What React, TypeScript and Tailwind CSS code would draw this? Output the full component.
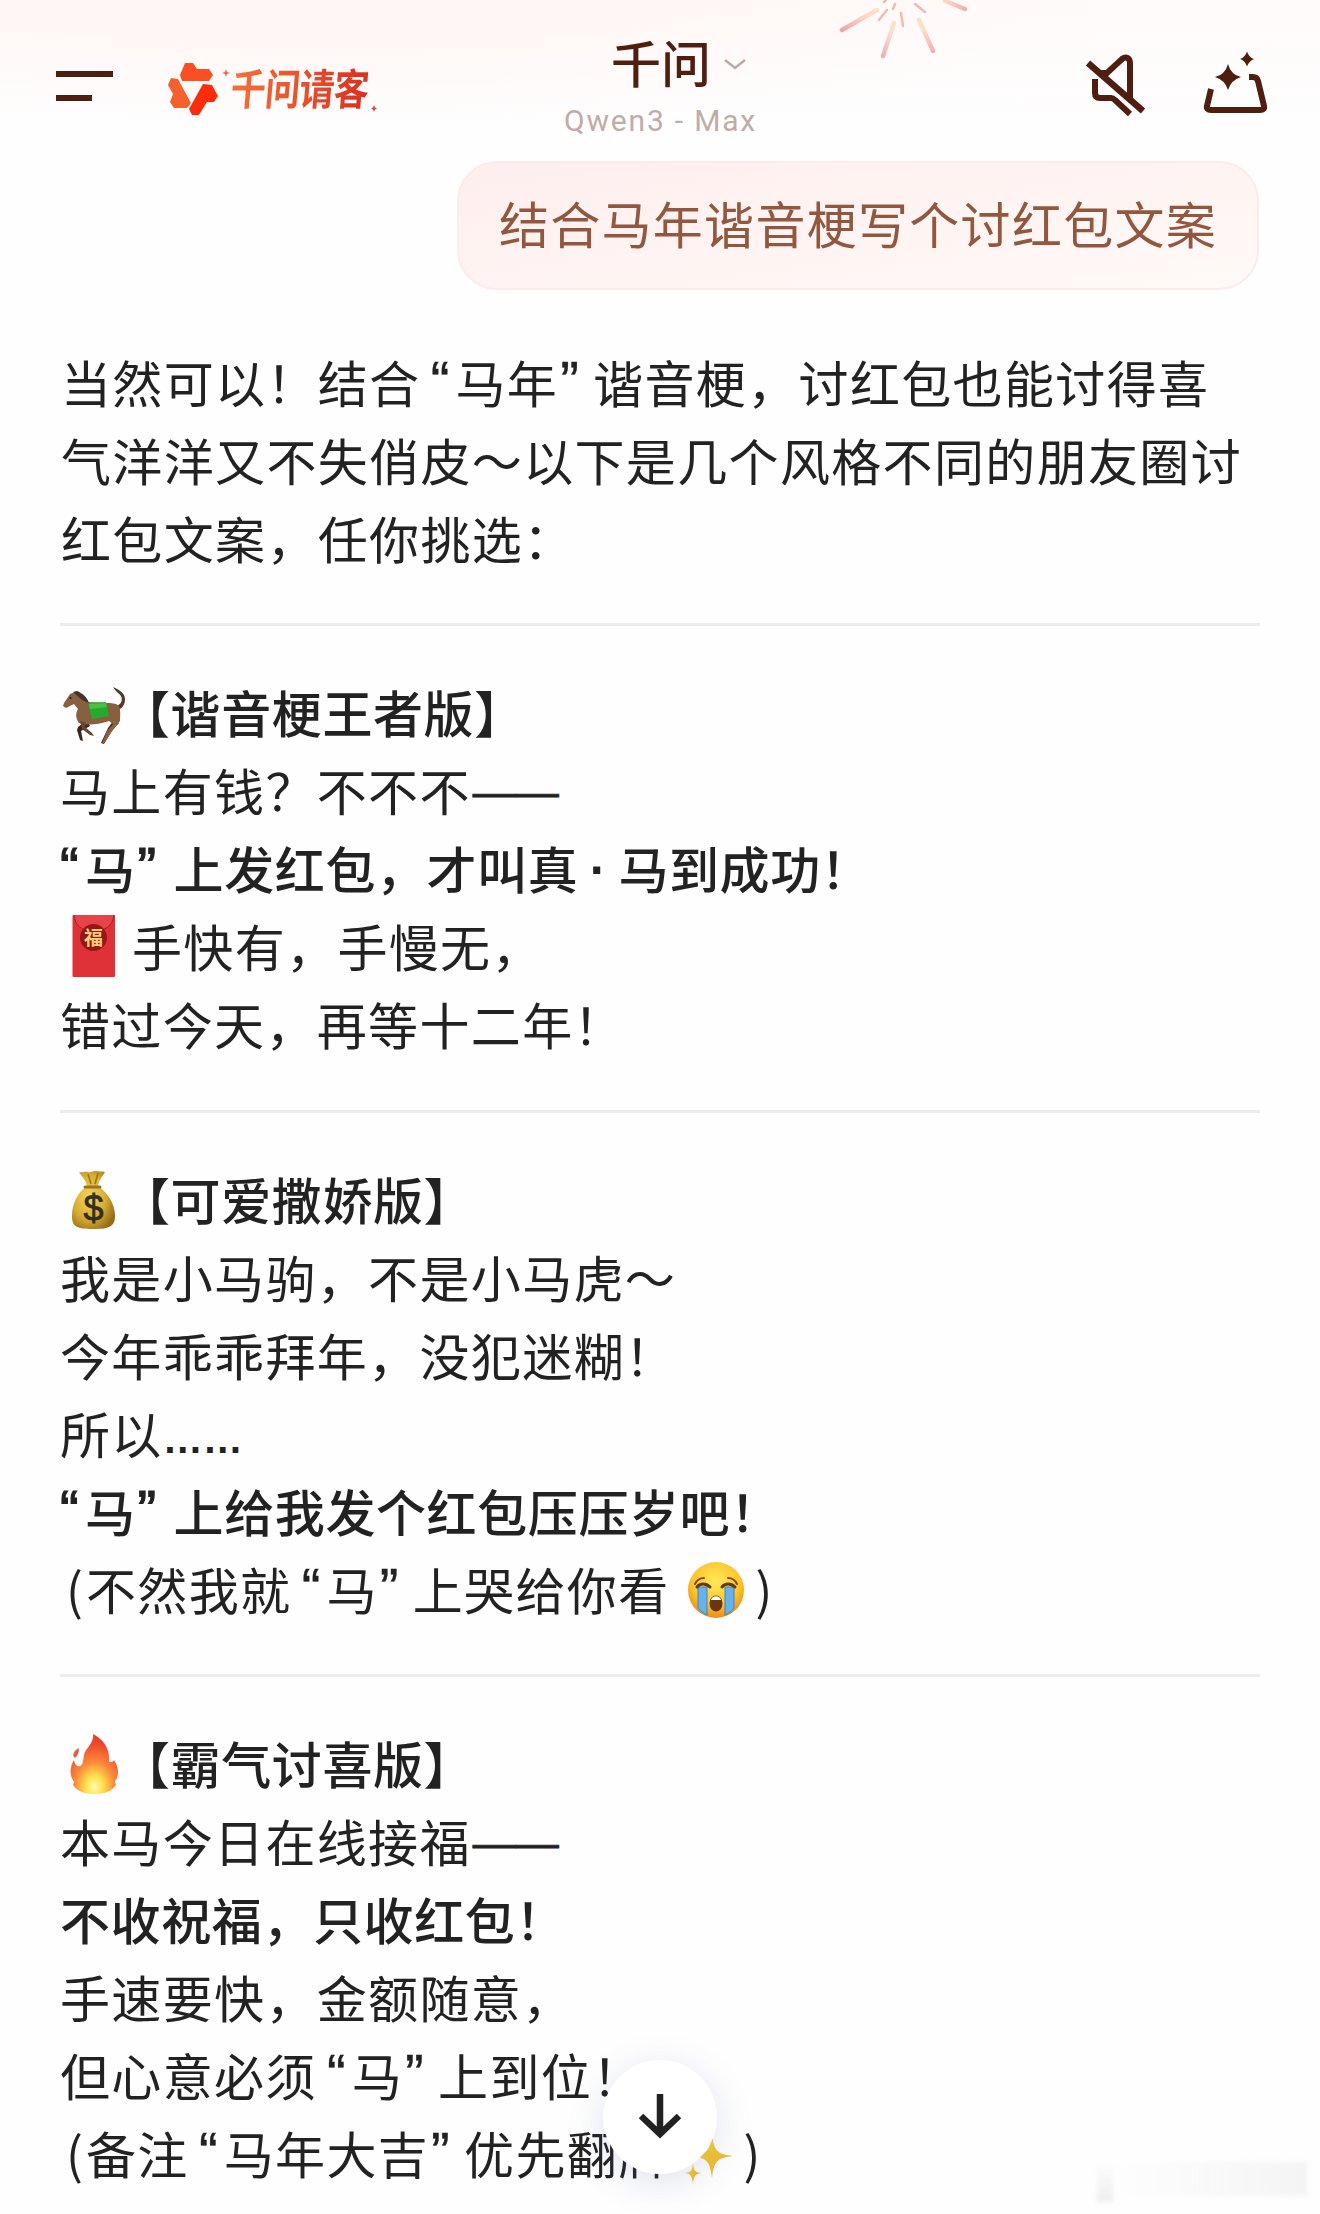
import React from "react";

const cjk = "font-['Noto_Sans_CJK_SC',sans-serif]";

function Line({ children, bold = false }: { children: React.ReactNode; bold?: boolean }) {
  return (
    <div
      className={
        bold
          ? "flex h-[78px] items-center whitespace-pre text-[50px] font-medium leading-[78px] tracking-[0.6px]"
          : "flex h-[78px] items-center whitespace-pre text-[50px] leading-[78px] tracking-[1.35px]"
      }
    >
      {children}
    </div>
  );
}

/* Curly quotes sit in narrow cells, close to the text that they enclose. */
const quoteCells = {
  start: "w-[25px] text-left [-webkit-text-stroke:1.2px_#222]",
  open: "w-[35px] pr-[6px] text-right [-webkit-text-stroke:0.4px_#222]",
  close: "w-[35px] pl-[2px] text-left [-webkit-text-stroke:0.4px_#222]",
  closeBold: "w-[38px] pl-[2px] text-left [-webkit-text-stroke:1.2px_#222]",
};

function Q({ children, at }: { children: string; at: keyof typeof quoteCells }) {
  return (
    <span className={`${quoteCells[at]} shrink-0 font-['Liberation_Sans',sans-serif] text-[56px] tracking-normal`}>
      {children}
    </span>
  );
}

function Dash() {
  return (
    <span className="ml-[2px] translate-y-[2px] font-['Liberation_Sans',sans-serif] text-[43px] tracking-normal [-webkit-text-stroke:0.8px_#222]">——</span>
  );
}

function Horse() {
  return (
    <svg className="-mr-[6px] h-[62px] w-[66px] shrink-0 translate-y-[3px]" viewBox="0 0 66 62" fill="none">
      <path d="M56 23c5-1 7-6 5-10-2-3-6-5-8-9 4 2 12 5 12 12 0 6-3 10-8 11Z" fill="#55362a" />
      <path d="m27 37-9 7-1 3 3 10 3 1-2-10 9-5m24-6-6 8-7 15 3 1 9-15 6-6" fill="#3c251c" />
      <path d="m15 9-5 2-6 9-1 3 3 2 8-4 4 5c-3 5-2 10 1 14 7 3 22 1 30-2l4 3-6 7-5 12h2l9-13 7-9c0-4 1-10-1-15-3-3-8-3-13-3l-18-1-10-9Z" fill="#87603f" />
      <path d="m13 9 4-1c5 2 10 6 12 12l-7-3Z" fill="#46302a" />
      <path d="m20 38 6 2-1 4 7 6 2 3-4-1-8-6Z" fill="#6b452f" />
      <path d="m28 20 18-1c1 5 2 11 3 14l-17 3Z" fill="#24aa2d" />
      <path d="m29 21 17-1 1 4-17 2Z" fill="#46c345" />
      <circle cx="10.500" cy="15" r="1" fill="#20130e" />
    </svg>
  );
}

function Envelope() {
  return (
    <svg className="mr-[6px] h-[68px] w-[66px] shrink-0 translate-y-[2px]" viewBox="0 0 66 68">
      <rect x="12.500" y="2" width="42.500" height="62" rx="1" fill="#df3238" />
      <path d="M14 2c1 11 8 16 19.500 16S53 13 54 2" fill="#e9434a" stroke="#9f2027" strokeWidth="1" />
      <circle cx="33.500" cy="24.500" r="13.500" fill="#96161b" />
      <text x="33.500" y="31.500" textAnchor="middle" fontSize="19" letterSpacing="0" fontWeight="700" fill="#f7cf74" fontFamily="Noto Sans CJK SC">福</text>
    </svg>
  );
}

function MoneyBag() {
  return (
    <svg className="-mr-[5px] h-[62px] w-[65px] shrink-0 translate-y-[2px]" viewBox="0 0 65 62">
      <defs>
        <radialGradient id="bag" cx="40%" cy="45%" r="65%">
          <stop offset="0" stopColor="#f2d75a" />
          <stop offset=".6" stopColor="#d7ab31" />
          <stop offset="1" stopColor="#946b18" />
        </radialGradient>
      </defs>
      <path d="M19 3c4 1 6-1 9 0s6-2 9-1 5 0 8 1c-3 5-6 8-7 14 9 6 17 17 17 30 0 10-5 13-22 13S12 57 12 47c0-13 6-24 15-30-1-6-5-9-8-14Z" fill="url(#bag)" />
      <path d="M25 18h15" stroke="#9b741f" strokeWidth="3" strokeLinecap="round" />
      <path d="m28 5 3 10m7-11-3 11" stroke="#9b741f" strokeWidth="1.500" />
      <text x="33.500" y="52" textAnchor="middle" fontSize="36" letterSpacing="0" fontWeight="500" fill="#332d25" stroke="#332d25" strokeWidth=".8" fontFamily="Liberation Sans">$</text>
    </svg>
  );
}

function Flame() {
  return (
    <svg className="-mr-[5px] h-[64px] w-[65px] shrink-0 translate-y-[3px]" viewBox="0 0 65 64">
      <defs>
        <radialGradient id="fire" cx="50%" cy="88%" r="75%">
          <stop offset="0" stopColor="#fffbb0" />
          <stop offset=".25" stopColor="#ffe04a" />
          <stop offset=".55" stopColor="#fd8a3c" />
          <stop offset="1" stopColor="#ea432c" />
        </radialGradient>
      </defs>
      <path d="M33 1c10 5 17 14 16 27 2 2 4 1 5-1 4 6 5 12 3 18l-2 3 1 4c-4 6-11 9-21 9-11 0-18-3-22-9l1-3c-5-7-4-16 0-22 1 5 3 7 6 6 3-1 3-5 4-11 2-8 10-11 9-21Z" fill="url(#fire)" />
      <path d="M19 15c-6 3-7 8-4 10 2-2 4-5 4-10Z" fill="#ed5a35" />
    </svg>
  );
}

function Crying() {
  return (
    <svg className="ml-[16px] mr-[10px] h-[60px] w-[60px] shrink-0 translate-y-[3px]" viewBox="0 0 60 60" fill="none">
      <defs>
        <radialGradient id="face" cx="50%" cy="35%" r="65%">
          <stop offset="0" stopColor="#ffe95a" />
          <stop offset=".65" stopColor="#fcc52e" />
          <stop offset="1" stopColor="#ea8a18" />
        </radialGradient>
      </defs>
      <circle cx="30" cy="29" r="28" fill="url(#face)" />
      <path d="M12 26h9v28c-4-2-7-4-9-7Zm27 0h9v21c-2 3-5 5-9 7Z" fill="#65b2ec" stroke="#3e83be" strokeWidth="1" />
      <path d="M11 26c3-4 9-4 13 0m12 0c3-4 9-4 13 0" stroke="#613812" strokeWidth="3" strokeLinecap="round" />
      <path d="M9 23c2-4 5-6 9-6m24 0c4 0 7 2 9 6" stroke="#81501a" strokeWidth="2" strokeLinecap="round" />
      <ellipse cx="30" cy="42.500" rx="6.500" ry="8" fill="#6a3510" />
      <path d="M25 39c1-5 9-5 10 0Z" fill="#fff" />
    </svg>
  );
}

function Sparkles() {
  return (
    <svg className="ml-[10px] mr-[8px] h-[60px] w-[56px] shrink-0 translate-y-[2px]" viewBox="0 0 56 60">
      <defs>
        <linearGradient id="spark" x2="1" y2="1">
          <stop stopColor="#f8e33a" />
          <stop offset="1" stopColor="#eda32d" />
        </linearGradient>
      </defs>
      <path d="M32 10c2 17 5 20 21 22-16 2-19 5-21 22-2-17-5-20-21-22 16-2 19-5 21-22Z" fill="url(#spark)" />
      <path d="M13 39c1 8 2 9 8 10-6 1-7 3-8 11-1-8-2-10-8-11 6-1 7-2 8-10Z" fill="url(#spark)" />
    </svg>
  );
}

function Fireworks() {
  return (
    <svg className="absolute left-[830px] top-0 h-[64px] w-[144px]" viewBox="830 0 144 64" fill="none">
      <defs>
        <radialGradient id="ray" gradientUnits="userSpaceOnUse" cx="903" cy="-4" r="68">
          <stop offset=".2" stopColor="#fbe6c4" />
          <stop offset=".6" stopColor="#fbdccb" />
          <stop offset="1" stopColor="#eda8aa" />
        </radialGradient>
      </defs>
      <g stroke="url(#ray)" strokeWidth="4.500" strokeLinecap="round">
        <path d="m877 10-35 20M894 23l-11 33M919 20l14 31M945 1l20 8" />
      </g>
      <g stroke="#efbbb4" strokeWidth="2.500" strokeLinecap="round">
        <path d="m887 10-8 10M901 13l2 13M915 4l10 8M895 4l-2 5M886 0l-2 2" />
      </g>
    </svg>
  );
}

function Header() {
  return (
    <header className="relative flex h-[161px] bg-[radial-gradient(ellipse_at_25%_-20%,#fff4f3_0%,transparent_60%),linear-gradient(180deg,#fffbfa_0%,#fefefe_90%)]">
      <Fireworks />
      <div className="ml-[56px] mt-[71px] flex h-[30px] w-[57px] flex-col justify-between">
        <div className="h-[6px] w-[57px] bg-[#4e1f10]" />
        <div className="h-[6px] w-[36px] bg-[#4e1f10]" />
      </div>
      <svg className="ml-[54px] mt-[62px] h-[54px] w-[64px] shrink-0" viewBox="0 0 64 54">
        <g>
          <path d="M18 1h8l4 6h12l4 6-4 6H15l-2-6Z" fill="#f94f22" />
          <path d="m4 16 7 1 13 24-4 5H7l-4-6 3-8-5-9Z" fill="#f4602e" />
          <path d="m36 22 9 1 6 11-4 6h-7l-8 13h-7l-3-6Z" fill="#fc2c0b" />
          <path d="M59 7l1 3 3 1-3 1-1 3-1-3-3-1 3-1Z" fill="#f0683a" />
        </g>
      </svg>
      <div className="mt-[63px] flex h-[50px] w-[150px] shrink-0 whitespace-nowrap">
        <span className="inline-block origin-left -skew-x-6 scale-y-[1.22] bg-gradient-to-r from-[#f4703a] to-[#d92a20] bg-clip-text pr-1 text-[35px] font-bold leading-[48px] tracking-[-0.600px] text-transparent">
          千问请客
        </span>
        <svg className="-ml-[2px] mt-[42px] h-[7px] w-[6px]" viewBox="0 0 6 7" fill="#d8483a">
          <path d="m3 0 1 2.500 2 1-2 1L3 7 2 4.500l-2-1 2-1Z" />
        </svg>
      </div>
      <div className="absolute left-[559px] top-[24px] flex w-[202px] flex-col items-center">
        <div className="flex h-[74px] w-full items-center pl-[52px]">
          <h1 className="text-[50px] font-medium leading-[74px] text-[#4e1f10]">千问</h1>
          <svg className="ml-[12px] mt-[8px] h-[14px] w-[24px]" viewBox="0 0 24 14" fill="none">
            <path d="m2 2 10 8 10-8" stroke="#bfa9a3" strokeWidth="2.500" />
          </svg>
        </div>
        <p className="mt-[5px] h-[36px] whitespace-nowrap pl-px font-[Roboto,sans-serif] text-[30px] leading-[36px] tracking-[1.8px] text-[#c0aca6]">Qwen3 - Max</p>
      </div>
      <svg className="absolute left-[1080px] top-[50px] h-[70px] w-[196px]" viewBox="1080 50 196 70" fill="none" stroke="#4e1f10" strokeWidth="6">
        <path d="m1088 63 55 48" strokeWidth="6.500" />
        <path d="M1100 73h7l15-14c4-3 8-1 8 4v36" />
        <path d="M1095 79v14q0 5 5 5h11q2 0 4 2l15 14" />
        <path d="m1211 89-4 17q-1 4 4 4h49q5 0 4-4l-6-25q-1-4-5-4h-4" />
        <path d="M1228 64q3 11 13 13-10 3-13 13-3-10-13-13 10-2 13-13ZM1247 51.500q2 6 7 7.500-5 2-7 7.500-2-6-7-7.500 5-1.500 7-7.500Z" fill="#4e1f10" stroke="none" />
      </svg>
    </header>
  );
}

export default function App() {
  return (
    <div className={`relative h-[2214px] w-[1320px] overflow-hidden bg-[#fefefe] text-[#222222] ${cjk}`} lang="zh-CN">
      <Header />
      <div className="flex justify-end pr-[61px]">
        <div className="flex h-[129px] w-[802px] items-center justify-center whitespace-nowrap rounded-[40px] border-2 border-[#fdebeb] bg-gradient-to-br from-[#feeeee] to-[#fffaf7] pb-[6px] text-[50px] tracking-[1.3px] text-[#92573f]">
          结合马年谐音梗写个讨红包文案
        </div>
      </div>
      <main className="px-[60px] pt-[52px]">
        <div className="pl-px">
          <Line>当然可以！结合<Q at="open">“</Q>马年<Q at="close">”</Q>谐音梗，讨红包也能讨得喜</Line>
          <Line>气洋洋又不失俏皮～以下是几个风格不同的朋友圈讨</Line>
          <Line>红包文案，任你挑选：</Line>
        </div>
        <hr className="mb-[46px] mt-[47px] border-0 border-t-[3px] border-[#ececec]" />
        <section>
          <Line bold><Horse />【谐音梗王者版】</Line>
          <Line>马上有钱？不不不<Dash /></Line>
          <Line bold><Q at="start">“</Q>马<Q at="closeBold">”</Q>上发红包，才叫真<span className="w-[40px] translate-y-[3px] text-center font-['Liberation_Sans',sans-serif] font-bold">·</span>马到成功！</Line>
          <Line><Envelope />手快有，手慢无，</Line>
          <Line>错过今天，再等十二年！</Line>
        </section>
        <hr className="mb-[46px] mt-[48px] border-0 border-t-[3px] border-[#ececec]" />
        <section>
          <Line bold><MoneyBag />【可爱撒娇版】</Line>
          <Line>我是小马驹，不是小马虎～</Line>
          <Line>今年乖乖拜年，没犯迷糊！</Line>
          <Line>所以<span className="translate-y-[7px] font-['Liberation_Sans',sans-serif] text-[40px] font-bold tracking-normal">……</span></Line>
          <Line bold><Q at="start">“</Q>马<Q at="closeBold">”</Q>上给我发个红包压压岁吧！</Line>
          <Line><span className="w-[26px] pl-[6px]">(</span>不然我就<Q at="open">“</Q>马<Q at="close">”</Q>上哭给你看<Crying />)</Line>
        </section>
        <hr className="mb-[46px] mt-[47px] border-0 border-t-[3px] border-[#ececec]" />
        <section>
          <Line bold><Flame />【霸气讨喜版】</Line>
          <Line>本马今日在线接福<Dash /></Line>
          <Line bold>不收祝福，只收红包！</Line>
          <Line>手速要快，金额随意，</Line>
          <Line>但心意必须<Q at="open">“</Q>马<Q at="close">”</Q>上到位！</Line>
          <Line><span className="w-[26px] pl-[6px]">(</span>备注<Q at="open">“</Q>马年大吉<Q at="close">”</Q>优先翻牌<Sparkles />)</Line>
        </section>
      </main>
      <button className="absolute left-[603px] top-[2060px] flex size-[114px] items-center justify-center rounded-full bg-white shadow-[0_8px_36px_rgba(90,100,170,0.18)]">
        <svg className="h-[48px] w-[44px]" viewBox="0 0 44 48" fill="none" stroke="#222" strokeWidth="6.500">
          <path d="M22 1v41M3 23l19 18 19-18" />
        </svg>
      </button>
      <div className="absolute left-[1097px] top-[2162px] flex h-[40px] w-[211px]">
        <div className="w-[16px] bg-gradient-to-b from-transparent to-[#eeeeee] blur-[2px]" />
        <div className="h-[34px] flex-1 bg-gradient-to-r from-transparent to-[#f4f4f4] blur-[2px]" />
      </div>
    </div>
  );
}
